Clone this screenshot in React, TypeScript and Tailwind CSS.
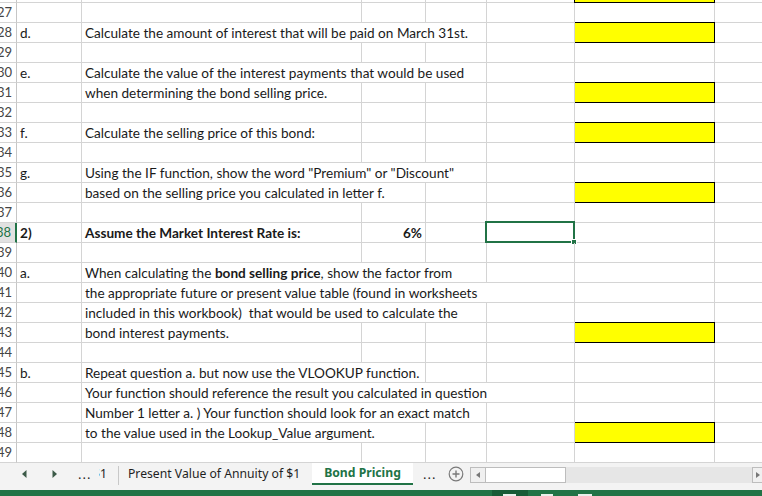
import React from "react";

type Row = {
  n: number;
  a?: string;
  b?: React.ReactNode;
  span?: 1 | 2 | 3 | 4;
  bold?: boolean;
  c?: string;
  yellow?: boolean;
  sel?: boolean;
};

const rows: Row[] = [
  { n: 27 },
  { n: 28, a: "d.", b: "Calculate the amount of interest that will be paid on March 31st.", span: 3, yellow: true },
  { n: 29 },
  { n: 30, a: "e.", b: "Calculate the value of the interest payments that would be used", span: 3 },
  { n: 31, b: "when determining the bond selling price.", span: 1, yellow: true },
  { n: 32 },
  { n: 33, a: "f.", b: "Calculate the selling price of this bond:", span: 1, yellow: true },
  { n: 34 },
  { n: 35, a: "g.", b: 'Using the IF function, show the word "Premium" or "Discount"', span: 3 },
  { n: 36, b: "based on the selling price you calculated in letter f.", span: 2, yellow: true },
  { n: 37 },
  { n: 38, a: "2)", b: "Assume the Market Interest Rate is:", span: 1, bold: true, c: "6%", sel: true },
  { n: 39 },
  {
    n: 40,
    a: "a.",
    b: (
      <>
        When calculating the <b className="font-bold">bond selling price</b>, show the factor from
      </>
    ),
    span: 3,
  },
  { n: 41, b: "the appropriate future or present value table (found in worksheets", span: 4 },
  { n: 42, b: "included in this workbook)  that would be used to calculate the", span: 3 },
  { n: 43, b: "bond interest payments.", span: 1, yellow: true },
  { n: 44 },
  { n: 45, a: "b.", b: "Repeat question a. but now use the VLOOKUP function.", span: 2 },
  { n: 46, b: "Your function should reference the result you calculated in question", span: 4 },
  { n: 47, b: "Number 1 letter a. ) Your function should look for an exact match", span: 3 },
  { n: 48, b: "to the value used in the Lookup_Value argument.", span: 2, yellow: true },
  { n: 49 },
];

const spanW: Record<number, string> = {
  1: "w-[280px]",
  2: "w-[344px]",
  3: "w-[405px]",
  4: "w-[493px]",
};

const line = "border-[#d4d4d4]";

function Header({ n, sel }: { n: number; sel?: boolean }) {
  return (
    <div
      className={
        "flex-none w-[17px] h-full overflow-hidden flex items-center justify-end pr-[4px] text-[13px] leading-none whitespace-nowrap border-b " +
        line +
        (sel
          ? " bg-[#e1e1e1] text-[#217346] border-r-2 border-r-[#217346]"
          : " bg-white text-[#444444] border-r border-r-[#c6c6c6]")
      }
    >
      {n}
    </div>
  );
}

function Cell({ w, children, extra }: { w: string; children?: React.ReactNode; extra?: string }) {
  return (
    <div
      className={
        "flex-none h-full border-r border-b " +
        line +
        " " +
        w +
        " flex items-center whitespace-pre pl-[3px] pt-[1px] " +
        (extra || "")
      }
    >
      {children !== undefined && children !== null ? <span className="whitespace-pre">{children}</span> : null}
    </div>
  );
}

function SheetRow({ r }: { r: Row }) {
  const span = r.span || 1;
  const after: { w: string; key: string; content?: React.ReactNode; extra?: string }[] = [];
  if (span < 2) after.push({ w: "w-[64px]", key: "c", content: r.c, extra: "justify-end pr-[3px]" + (r.bold ? " font-bold" : "") });
  if (span < 3) after.push({ w: "w-[61px]", key: "d" });
  return (
    <div className="flex h-[20px]">
      <Header n={r.n} sel={r.sel} />
      <Cell w="w-[65px]" extra={r.bold ? "font-bold" : ""}>
        {r.a}
      </Cell>
      <Cell w={spanW[span]} extra={r.bold ? "font-bold" : ""}>
        {r.b}
      </Cell>
      {after.map((c) => (
        <Cell key={c.key} w={c.w} extra={c.extra}>
          {c.content}
        </Cell>
      ))}
      {span < 4 ? (
        <div className={"relative flex-none w-[88px] h-full border-r border-b " + line}>
          {r.sel ? (
            <div className="absolute left-[-2px] top-[-2px] w-[90px] h-[22px] border-2 border-[#217346]">
              <div className="absolute right-[-4px] bottom-[-4px] w-[6px] h-[6px] bg-[#217346] border border-white" />
            </div>
          ) : null}
        </div>
      ) : null}
      {r.yellow ? (
        <div className="flex-none -ml-px -mt-px w-[141px] h-[21px] border border-black bg-[#ffff00]" />
      ) : (
        <div className={"flex-none w-[140px] h-full border-r border-b " + line} />
      )}
      <div className={"flex-1 h-full border-b " + line} />
    </div>
  );
}

function Tri({ dir }: { dir: "l" | "r" }) {
  return (
    <svg width="5" height="8" viewBox="0 0 5 8" className="flex-none">
      {dir === "l" ? <polygon points="4.5,0 0,4 4.5,8" fill="#3c5a48" /> : <polygon points="0.5,0 5,4 0.5,8" fill="#3c5a48" />}
    </svg>
  );
}

export default function App() {
  return (
    <div className="w-[762px] h-[496px] overflow-hidden bg-white flex flex-col font-['Lato',sans-serif] text-[13.6px] text-[#1a1a1a]">
      {/* partial row 26 */}
      <div className="flex h-[3px] flex-none">
        <div className="flex-none w-[17px] h-full border-r border-b border-r-[#c6c6c6] border-b-[#d4d4d4]" />
        <div className={"flex-none w-[65px] h-full border-r border-b " + line} />
        <div className={"flex-none w-[280px] h-full border-r border-b " + line} />
        <div className={"flex-none w-[64px] h-full border-r border-b " + line} />
        <div className={"flex-none w-[61px] h-full border-r border-b " + line} />
        <div className={"flex-none w-[88px] h-full border-r border-b " + line} />
        <div className="flex-none -ml-px w-[141px] h-full border-x border-b border-black bg-[#ffff00]" />
        <div className={"flex-1 h-full border-b " + line} />
      </div>
      {rows.map((r) => (
        <SheetRow key={r.n} r={r} />
      ))}

      {/* sheet tab bar */}
      <div className="flex-none h-[27px] bg-[#f3f3f3] font-['Noto_Sans',sans-serif] text-[12.2px] text-[#1f1f1f]">
        <div className="flex items-center h-[22px]">
          <div className="ml-[22px] flex items-center">
            <Tri dir="l" />
          </div>
          <div className="ml-[25px] flex items-center">
            <Tri dir="r" />
          </div>
          <div className="ml-[21px] w-[12px] text-[13px] leading-none tracking-[1px]">...</div>
          <div className="ml-[9px] w-[8px] overflow-hidden flex justify-end">
            <span className="whitespace-nowrap">$1</span>
          </div>
          <div className="ml-[11px] w-px h-[19px] bg-[#c8c8c8] self-end" />
          <div className="w-[193px] pl-[9px] whitespace-nowrap">Present Value of Annuity of $1</div>
          <div className="w-[101px] h-full bg-white border-b-2 border-[#217346] flex items-center justify-center font-bold text-[#217346] whitespace-nowrap">
            Bond Pricing
          </div>
          <div className="w-[35px] pl-[10px] text-[13px] leading-none tracking-[1px]">...</div>
          <svg width="16" height="16" viewBox="0 0 16 16" className="flex-none">
            <circle cx="8" cy="8" r="6.8" fill="none" stroke="#7a7a7a" strokeWidth="1.2" />
            <path d="M8 4.5v7M4.5 8h7" stroke="#7a7a7a" strokeWidth="1.4" />
          </svg>
          <div className="ml-[6px] flex items-center h-[16px] mt-[2px] flex-1">
            <div className="flex-none w-[16px] h-full border border-[#bdbdbd] bg-[#f0f0f0] flex items-center justify-center">
              <svg width="4" height="6" viewBox="0 0 4 6">
                <polygon points="4,0 0,3 4,6" fill="#777" />
              </svg>
            </div>
            <div className="flex-none w-[81px] h-full border border-[#bdbdbd] bg-white -ml-px" />
            <div className="flex-1 h-full bg-[#e6e6e6]" />
            <div className="flex-none w-[10px] h-full border-l border-y border-[#bdbdbd] bg-[#f0f0f0] flex items-center pl-[3px]">
              <svg width="4" height="6" viewBox="0 0 4 6">
                <polygon points="0,0 4,3 0,6" fill="#777" />
              </svg>
            </div>
          </div>
        </div>
      </div>

      {/* status bar */}
      <div className="flex-none h-[6px] bg-[#217346] flex items-end">
        <div className="ml-[492px] w-[36px] h-full bg-[#185c37] flex items-end">
          <div className="ml-[11px] w-[13px] h-[2px] bg-[#e8f0eb]" />
        </div>
        <div className="ml-[13px] w-[12px] h-[2px] bg-[#e8f0eb]" />
        <div className="ml-[25px] w-[14px] h-[2px] bg-[#e8f0eb]" />
      </div>
    </div>
  );
}
